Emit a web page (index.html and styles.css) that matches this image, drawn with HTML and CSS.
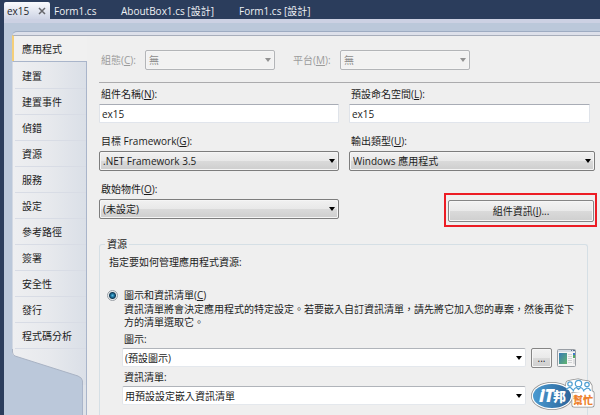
FILE: index.html
```html
<!DOCTYPE html>
<html lang="zh-Hant">
<head>
<meta charset="utf-8">
<title>ex15</title>
<link rel="stylesheet" href="styles.css">
</head>
<body>
<header class="tabs">
  <div class="tab tab-active"><a href="#">ex15</a>
    <button class="close" aria-label="關閉"><svg width="8" height="8" viewBox="0 0 8 8"><path d="M1 1L7 7M7 1L1 7" stroke="#66676c" stroke-width="1.5" fill="none"/></svg></button>
  </div>
  <a class="tab tab-form" href="#">Form1.cs</a>
  <a class="tab tab-about" href="#">AboutBox1.cs [設計]</a>
  <a class="tab" href="#">Form1.cs [設計]</a>
</header>
<div class="frame">
  <div class="designer">
    <div class="sidebar">
      <nav class="nav">
        <a class="nav-active" href="#">應用程式</a>
        <div class="nav-rest">
          <a href="#">建置</a>
          <a href="#">建置事件</a>
          <a href="#">偵錯</a>
          <a href="#">資源</a>
          <a href="#">服務</a>
          <a href="#">設定</a>
          <a href="#">參考路徑</a>
          <a href="#">簽署</a>
          <a href="#">安全性</a>
          <a href="#">發行</a>
          <a href="#">程式碼分析</a>
        </div>
      </nav>
      <svg class="slope" width="75" height="36" viewBox="0 0 75 36">
        <defs><linearGradient id="side" x1="0" x2="1" y1="0" y2="0"><stop offset="0" stop-color="#eeeff1"/><stop offset=".5" stop-color="#e7e9ed"/><stop offset="1" stop-color="#dadfe7"/></linearGradient></defs>
        <path d="M0 0H75V36H70V32Q70 29 66 27L3 7Q0 6 0 3Z" fill="url(#side)"/>
        <path d="M.5 0V3Q.5 6 3 7L66 27Q70.500 29 70.500 32V36" fill="none" stroke="#a9b3c4"/>
        <path d="M74.500 0V36" stroke="#a9b5ca"/>
      </svg>
      <div class="stem"></div>
    </div>
    <main class="page">
      <div class="config">
        <label for="config">組態(<u>C</u>):</label>
        <span class="drop drop-off"><select id="config" disabled><option>無</option></select></span>
        <label class="platform" for="platform">平台(<u>M</u>):</label>
        <span class="drop drop-off"><select id="platform" disabled><option>無</option></select></span>
      </div>
      <div class="fields">
        <div class="field"><label for="asm">組件名稱(<u>N</u>):</label><input id="asm" type="text" value="ex15"></div>
        <div class="field field-namespace"><label for="ns">預設命名空間(<u>L</u>):</label><input id="ns" type="text" value="ex15"></div>
        <div class="field"><label for="fw">目標 Framework(<u>G</u>):</label><span class="drop"><select id="fw"><option>.NET Framework 3.5</option></select></span></div>
        <div class="field"><label for="out">輸出類型(<u>U</u>):</label><span class="drop"><select id="out"><option>Windows 應用程式</option></select></span></div>
        <div class="field"><label for="start">啟始物件(<u>O</u>):</label><span class="drop"><select id="start"><option>(未設定)</option></select></span></div>
        <div class="highlight"><button class="btn">組件資訊(<u>I</u>)...</button></div>
      </div>
      <fieldset class="group">
        <legend>資源</legend>
        <p class="intro">指定要如何管理應用程式資源:</p>
        <div class="choice"><input type="radio" id="icon-manifest" name="res" checked><label for="icon-manifest">圖示和資訊清單(<u>C</u>)</label></div>
        <div class="details">
          <p>資訊清單將會決定應用程式的特定設定。若要嵌入自訂資訊清單，請先將它加入您的專案，然後再從下方的清單選取它。</p>
          <div class="resources">
            <label for="icon">圖示:</label>
            <span class="drop drop-plain"><select id="icon"><option>(預設圖示)</option></select></span>
            <button class="btn browse">...</button>
            <svg class="preview" width="20" height="20" viewBox="0 0 20 20">
              <defs><linearGradient id="pic" x1="0" x2="1" y1="0" y2="1"><stop offset="0" stop-color="#387ab6"/><stop offset="1" stop-color="#61b56e"/></linearGradient></defs>
              <rect x=".5" y="1.500" width="18" height="17" rx="1" fill="#f5f5f5" stroke="#999ea4"/>
              <path d="M1 2H18V4H1Z" fill="#d6dce5"/><path d="M14 2.500H15M16 2.500H18" stroke="#586e8e"/>
              <rect x="2" y="5" width="8" height="11" fill="url(#pic)"/>
              <path d="M11 6.500H15M11 8.500H15M11 10.500H15M11 12.500H15M11 14.500H15" stroke="#d1d3d5"/>
              <path d="M16 5H18V7H16Z" fill="#3d78c9"/><path d="M16 7H18V10H16Z" fill="#55a965"/><path d="M16 11H18V16H16Z" fill="#dedfe0"/>
            </svg>
            <label for="manifest">資訊清單:</label>
            <span class="drop drop-plain"><select id="manifest"><option>用預設設定嵌入資訊清單</option></select></span>
          </div>
        </div>
      </fieldset>
    </main>
  </div>
</div>
<svg class="logo" width="66" height="33" viewBox="0 0 66 33" role="img" aria-label="iT邦幫忙">
  <defs><linearGradient id="blue" x1="0" x2="1" y1="0" y2="0"><stop offset="0" stop-color="#4a9ad0"/><stop offset="1" stop-color="#2c659b"/></linearGradient></defs>
  <g fill="#8f8f8f" stroke="#8f8f8f" stroke-width="5" stroke-linejoin="round">
    <ellipse cx="21" cy="18" rx="18.500" ry="11.500"/>
    <path d="M43 15H61V27H43ZM36 12L37 5L41 4L47 3L51 4L57 5L59 8V14Z"/>
  </g>
  <g fill="#fff" stroke="#fff" stroke-width="3.500" stroke-linejoin="round">
    <ellipse cx="21" cy="18" rx="18.500" ry="11.500"/>
    <path d="M43 15H61V27H43ZM36 12L37 5L41 4L47 3L51 4L57 5L59 8V14Z"/>
  </g>
  <ellipse cx="21" cy="18" rx="19" ry="12" fill="url(#blue)"/>
  <g fill="#fff" stroke="#4e9fd2" stroke-width="1.200">
    <circle cx="39" cy="6" r="2.200"/><path d="M35.500 12Q37 9 39.500 9.500L42 12"/>
    <circle cx="56" cy="6.500" r="2.200"/><path d="M53 12L56 10Q59 10 59.500 13"/>
    <circle cx="47.500" cy="5.500" r="3.200"/><path d="M42 13.500Q43 10 45.500 9.500L47.500 11.500L49.500 9.500Q52 10 53 13.500"/>
  </g>
  <text x="8" y="24" class="logo-it">iT</text>
  <text x="22" y="23" class="logo-bang">邦</text>
  <text x="42" y="26" class="logo-help">幫忙</text>
</svg>
</body>
</html>
```
FILE: styles.css
```css
* { box-sizing: border-box; }

body {
  margin: 0;
  height: 100vh;
  overflow: hidden;
  display: flex;
  flex-direction: column;
  padding-left: 4px;
  background: #2b3d5c;
  color: #1c1c1c;
  font: 10px/14px "Open Sans", "Noto Sans CJK TC", sans-serif;
}

a { color: inherit; text-decoration: none; }
p { margin: 0; }
input, select, button { font: inherit; color: inherit; margin: 0; }
u { text-underline-offset: 1px; }

.tabs {
  flex: none;
  display: flex;
  height: 19px;
  padding-top: 2px;
  color: #eef0f4;
}
.tab { line-height: 18px; white-space: nowrap; }
.tab-active {
  display: flex;
  align-items: center;
  justify-content: space-between;
  width: 46px;
  margin-right: 4px;
  padding: 0 4px 0 3px;
  border-radius: 2px 2px 0 0;
  background: linear-gradient(#fafbfd, #ced4e5);
  color: #25272c;
}
.close { display: flex; padding: 0; border: 0; background: none; }
.tab-form { width: 67px; }
.tab-about { width: 118px; }

.frame {
  flex: 1;
  min-height: 0;
  display: flex;
  padding: 8px 0 0 8px;
  border-top: 4px solid #ccd1e3;
  background: #bbc8da;
}
.designer {
  flex: 1;
  min-width: 0;
  display: flex;
  border-top: 1px solid #9eacc2;
  border-radius: 5px 0 0 0;
  box-shadow: inset 0 3px #dde0ea;
  padding-top: 3px;
}

.sidebar { flex: none; width: 75px; display: flex; flex-direction: column; }
.nav a {
  display: block;
  height: 26px;
  padding-left: 10px;
  line-height: 26px;
}
.nav .nav-active {
  border-top: 1px solid #a8aebb;
  border-left: 2px solid #f5cf79;
  padding-left: 8px;
  background: #f0f0f0;
}
.nav-rest {
  padding-top: 1px;
  border: solid #a9b5ca;
  border-width: 1px 1px 0 1px;
  border-left-color: #d3d9e3;
  background: linear-gradient(90deg, #eeeff1, #e7e9ed 50%, #dadfe7);
}
.nav-rest a { border-bottom: 1px solid #d8dce5; margin-left: 2px; padding-left: 7px; }
.slope { display: block; flex: none; }
.stem {
  flex: 1;
  width: 5px;
  align-self: flex-end;
  border: solid #a9b5ca;
  border-width: 0 1px;
  background: #dfe3e9;
}

.page {
  flex: 1;
  min-width: 0;
  display: flex;
  flex-direction: column;
  padding: 14px 5px 0 0;
  border-top: 1px solid #a8aebb;
  background: #efefef;
}

.config {
  display: flex;
  align-items: center;
  padding: 0 0 12px 2px;
  margin: 0 -5px 0 12px;
  border-bottom: 1px solid #ababad;
  color: #9b9b9b;
}
.config label { width: 44px; }
.config .platform { width: 47px; margin-left: 18px; }
.config .drop { width: 130px; }

.drop { position: relative; display: block; }
.drop::after {
  content: "";
  position: absolute;
  right: 4px;
  top: 8px;
  border: solid transparent;
  border-width: 4px 3px 0;
  border-top-color: #000;
  pointer-events: none;
}
.drop select {
  appearance: none;
  display: block;
  width: 100%;
  height: 20px;
  padding: 0 14px 0 3px;
  border: 1px solid #7d7d7d;
  border-radius: 2px;
  background: linear-gradient(#f1f1f1, #e8e8e8 50%, #dadada 50%, #cecece);
  box-shadow: inset 0 0 0 1px #f5f5f5;
}
.drop-off select { border-color: #b3b5b8; background: #f2f2f2; color: #8c8c8c; opacity: 1; }
.drop-off::after { border-top-color: #929292; }
.drop-plain select {
  height: 19px;
  padding-left: 2px;
  border-color: #b0b4ba #e2e5e9 #e4e8ed;
  background: #fff;
  box-shadow: none;
}

.fields {
  display: grid;
  grid-template-columns: 240fr 246fr;
  column-gap: 10px;
  row-gap: 11px;
  padding: 4px 0 0 12px;
}
.field label { display: block; padding-left: 2px; margin-bottom: 3px; }
.field input {
  display: block;
  width: 100%;
  height: 19px;
  padding: 0 2px;
  border: 1px solid;
  border-color: #a8acb5 #dfe3e9 #e1e5ec;
  border-radius: 1px;
  background: #fff;
}
.field-namespace { padding-right: 5px; }

.highlight {
  width: 153px;
  margin: 11px -2px 0 auto;
  padding: 5px 1px 3px 2px;
  border: 2px solid #ec1c24;
}
.btn {
  display: block;
  width: 100%;
  height: 22px;
  padding: 0;
  border: 1px solid #858585;
  border-radius: 2px;
  background: linear-gradient(#f2f2f2, #e9e9e9 50%, #dadada 50%, #cfcfcf);
  box-shadow: inset 0 0 0 1px #f6f6f6;
}

.group {
  flex: 1;
  min-width: 0;
  margin: 10px 7px 0 12px;
  padding: 4px 10px 0 9px;
  border: 1px solid #d5dfe5;
  border-bottom: 0;
  border-radius: 3px 3px 0 0;
}
.group legend { margin-left: -4px; padding: 0 2px; }
.choice { display: flex; align-items: center; gap: 5px; margin-top: 19px; margin-left: -2px; }
.choice input {
  appearance: none;
  width: 11px;
  height: 11px;
  border: 1px solid #9a9fa5;
  border-radius: 50%;
  background: radial-gradient(circle, #55bde4 0, #176690 2px, #123b55 3px, #e8ebed 4px);
}
.choice label { padding-left: 1px; }
.details { padding: 1px 0 0 13px; }
.details p { padding-left: 2px; line-height: 13px; }
.resources {
  display: grid;
  grid-template-columns: 1fr 21px 20px;
  column-gap: 5px;
  row-gap: 2px;
  padding-top: 3px;
}
.resources label { grid-column: 1 / -1; padding-left: 2px; }
.browse { height: 20px; }
.preview { display: block; }

.logo { position: absolute; right: 3px; bottom: 4px; }
.logo text { font-family: "Noto Sans CJK TC", sans-serif; font-weight: 900; }
.logo .logo-it { font: italic 900 17px "Open Sans", sans-serif; fill: #fff; }
.logo .logo-bang { font-size: 13px; fill: #fff; }
.logo .logo-help { font-size: 10px; fill: #ed812c; }
```
